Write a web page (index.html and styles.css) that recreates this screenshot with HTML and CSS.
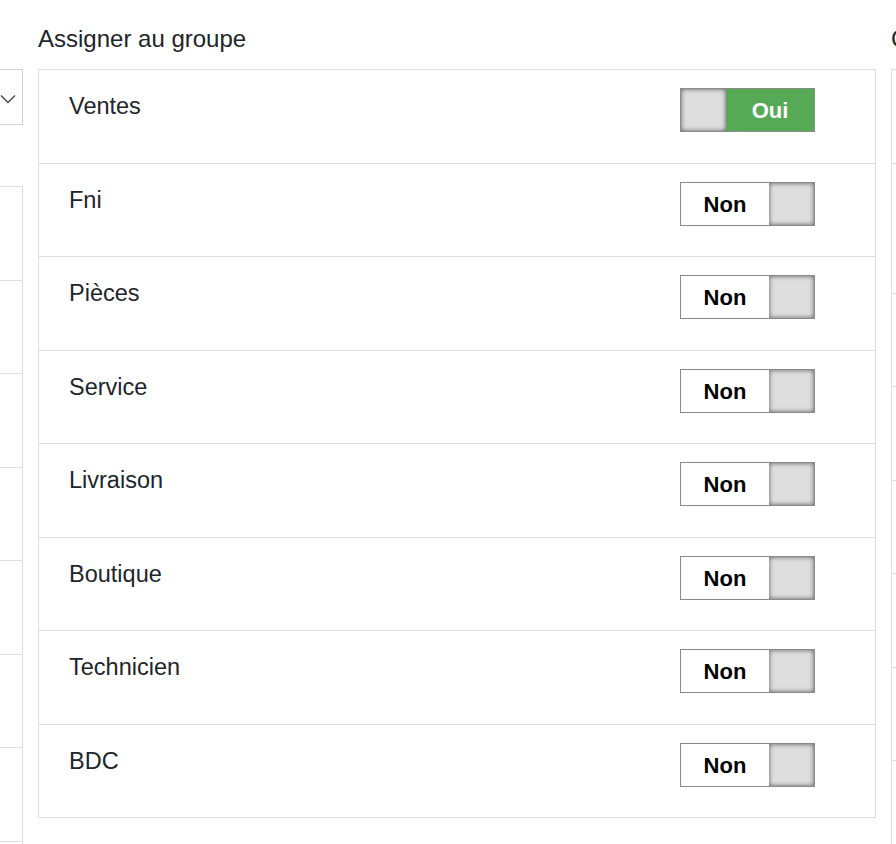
FILE: index.html
```html
<!DOCTYPE html>
<html lang="fr">

<head>
  <meta charset="UTF-8">
  <meta name="viewport" content="width=device-width, initial-scale=1.0">
  <title>Groupes</title>
  <link rel="stylesheet" href="styles.css">
</head>

<body>
  <div class="columns">

    <!-- colonne de gauche (coupée) -->
    <div class="column column-left">
      <div class="column-spacer"></div>
      <div class="select">
        <svg class="select-arrow" width="16" height="10" viewBox="0 0 16 10">
          <polyline points="1,1.5 8,8.5 15,1.5" fill="none" stroke="#4a4a4a" stroke-width="1.4" />
        </svg>
      </div>
      <div class="panel panel-list">
        <div class="row"></div>
        <div class="row"></div>
        <div class="row"></div>
        <div class="row"></div>
        <div class="row"></div>
        <div class="row"></div>
        <div class="row"></div>
        <div class="row"></div>
      </div>
    </div>

    <!-- assigner au groupe -->
    <div class="column column-main">
      <h2 class="column-title">Assigner au groupe</h2>
      <div class="panel">
        <div class="row">
          <span class="row-label">Ventes</span>
          <div class="toggle is-on">
            <span class="toggle-thumb"></span>
            <span class="toggle-text">Oui</span>
          </div>
        </div>
        <div class="row">
          <span class="row-label">Fni</span>
          <div class="toggle">
            <span class="toggle-text">Non</span>
            <span class="toggle-thumb"></span>
          </div>
        </div>
        <div class="row">
          <span class="row-label">Pièces</span>
          <div class="toggle">
            <span class="toggle-text">Non</span>
            <span class="toggle-thumb"></span>
          </div>
        </div>
        <div class="row">
          <span class="row-label">Service</span>
          <div class="toggle">
            <span class="toggle-text">Non</span>
            <span class="toggle-thumb"></span>
          </div>
        </div>
        <div class="row">
          <span class="row-label">Livraison</span>
          <div class="toggle">
            <span class="toggle-text">Non</span>
            <span class="toggle-thumb"></span>
          </div>
        </div>
        <div class="row">
          <span class="row-label">Boutique</span>
          <div class="toggle">
            <span class="toggle-text">Non</span>
            <span class="toggle-thumb"></span>
          </div>
        </div>
        <div class="row">
          <span class="row-label">Technicien</span>
          <div class="toggle">
            <span class="toggle-text">Non</span>
            <span class="toggle-thumb"></span>
          </div>
        </div>
        <div class="row">
          <span class="row-label">BDC</span>
          <div class="toggle">
            <span class="toggle-text">Non</span>
            <span class="toggle-thumb"></span>
          </div>
        </div>
      </div>
    </div>

    <!-- colonne de droite (coupée) -->
    <div class="column column-right">
      <h2 class="column-title">C</h2>
      <div class="panel">
        <div class="row"></div>
        <div class="row row-tall"></div>
        <div class="row"></div>
        <div class="row"></div>
        <div class="row"></div>
        <div class="row"></div>
        <div class="row"></div>
        <div class="row"></div>
      </div>
    </div>

  </div>
</body>

</html>
```

FILE: styles.css
```css
:root {
  --textColor: #212529;
  --lineColor: #dedede;
  --onColor: #56a955;
  --thumbColor: #dedede;
}

html,
body {
  overflow: hidden;
}

body {
  margin: 0;
  background: #fff;
  color: var(--textColor);
  font-family: "Liberation Sans", Arial, sans-serif;
}

.columns {
  display: flex;
  align-items: flex-start;
  gap: 15px;
  padding-top: 21px;
}

.column {
  flex: none;
}

.column-left {
  width: 300px;
  margin-left: -277px;
}

.column-main {
  width: 838px;
}

.column-right {
  width: 400px;
}

.column-title {
  margin: 0 0 12px 0;
  font-size: 24px;
  font-weight: normal;
  line-height: 36px;
  white-space: nowrap;
}

.column-spacer {
  height: 48px;
}

.panel {
  border: 1px solid var(--lineColor);
}

.panel-list {
  margin-top: 61px;
  border-right: 1px solid var(--lineColor);
}

.row {
  display: flex;
  justify-content: space-between;
  align-items: flex-start;
  padding: 18px 60px 30.5px 30px;
  min-height: 44px;
}

.row + .row {
  border-top: 1px solid var(--lineColor);
}

.row-tall {
  min-height: 80.5px;
}

.row-label {
  font-size: 23.5px;
  line-height: 36px;
}

/* select */

.select {
  box-sizing: border-box;
  height: 56px;
  display: flex;
  justify-content: flex-end;
  align-items: center;
  padding: 0 6px 0 15px;
  border: 1px solid #cfd2d6;
}

.select-arrow {
  display: block;
  margin-top: 3px;
}

/* toggle oui / non */

.toggle {
  box-sizing: border-box;
  width: 135px;
  height: 44px;
  display: flex;
  border: 1px solid #8a8a8a;
  background: #fff;
}

.toggle-text {
  flex: 1;
  text-align: center;
  font-size: 22px;
  font-weight: bold;
  line-height: 43px;
  color: #000;
}

.toggle-thumb {
  width: 45px;
  background: var(--thumbColor);
  box-shadow: inset 0 0 5px rgba(0, 0, 0, 0.6);
}

.toggle.is-on .toggle-text {
  background: var(--onColor);
  color: #fff;
}
```
